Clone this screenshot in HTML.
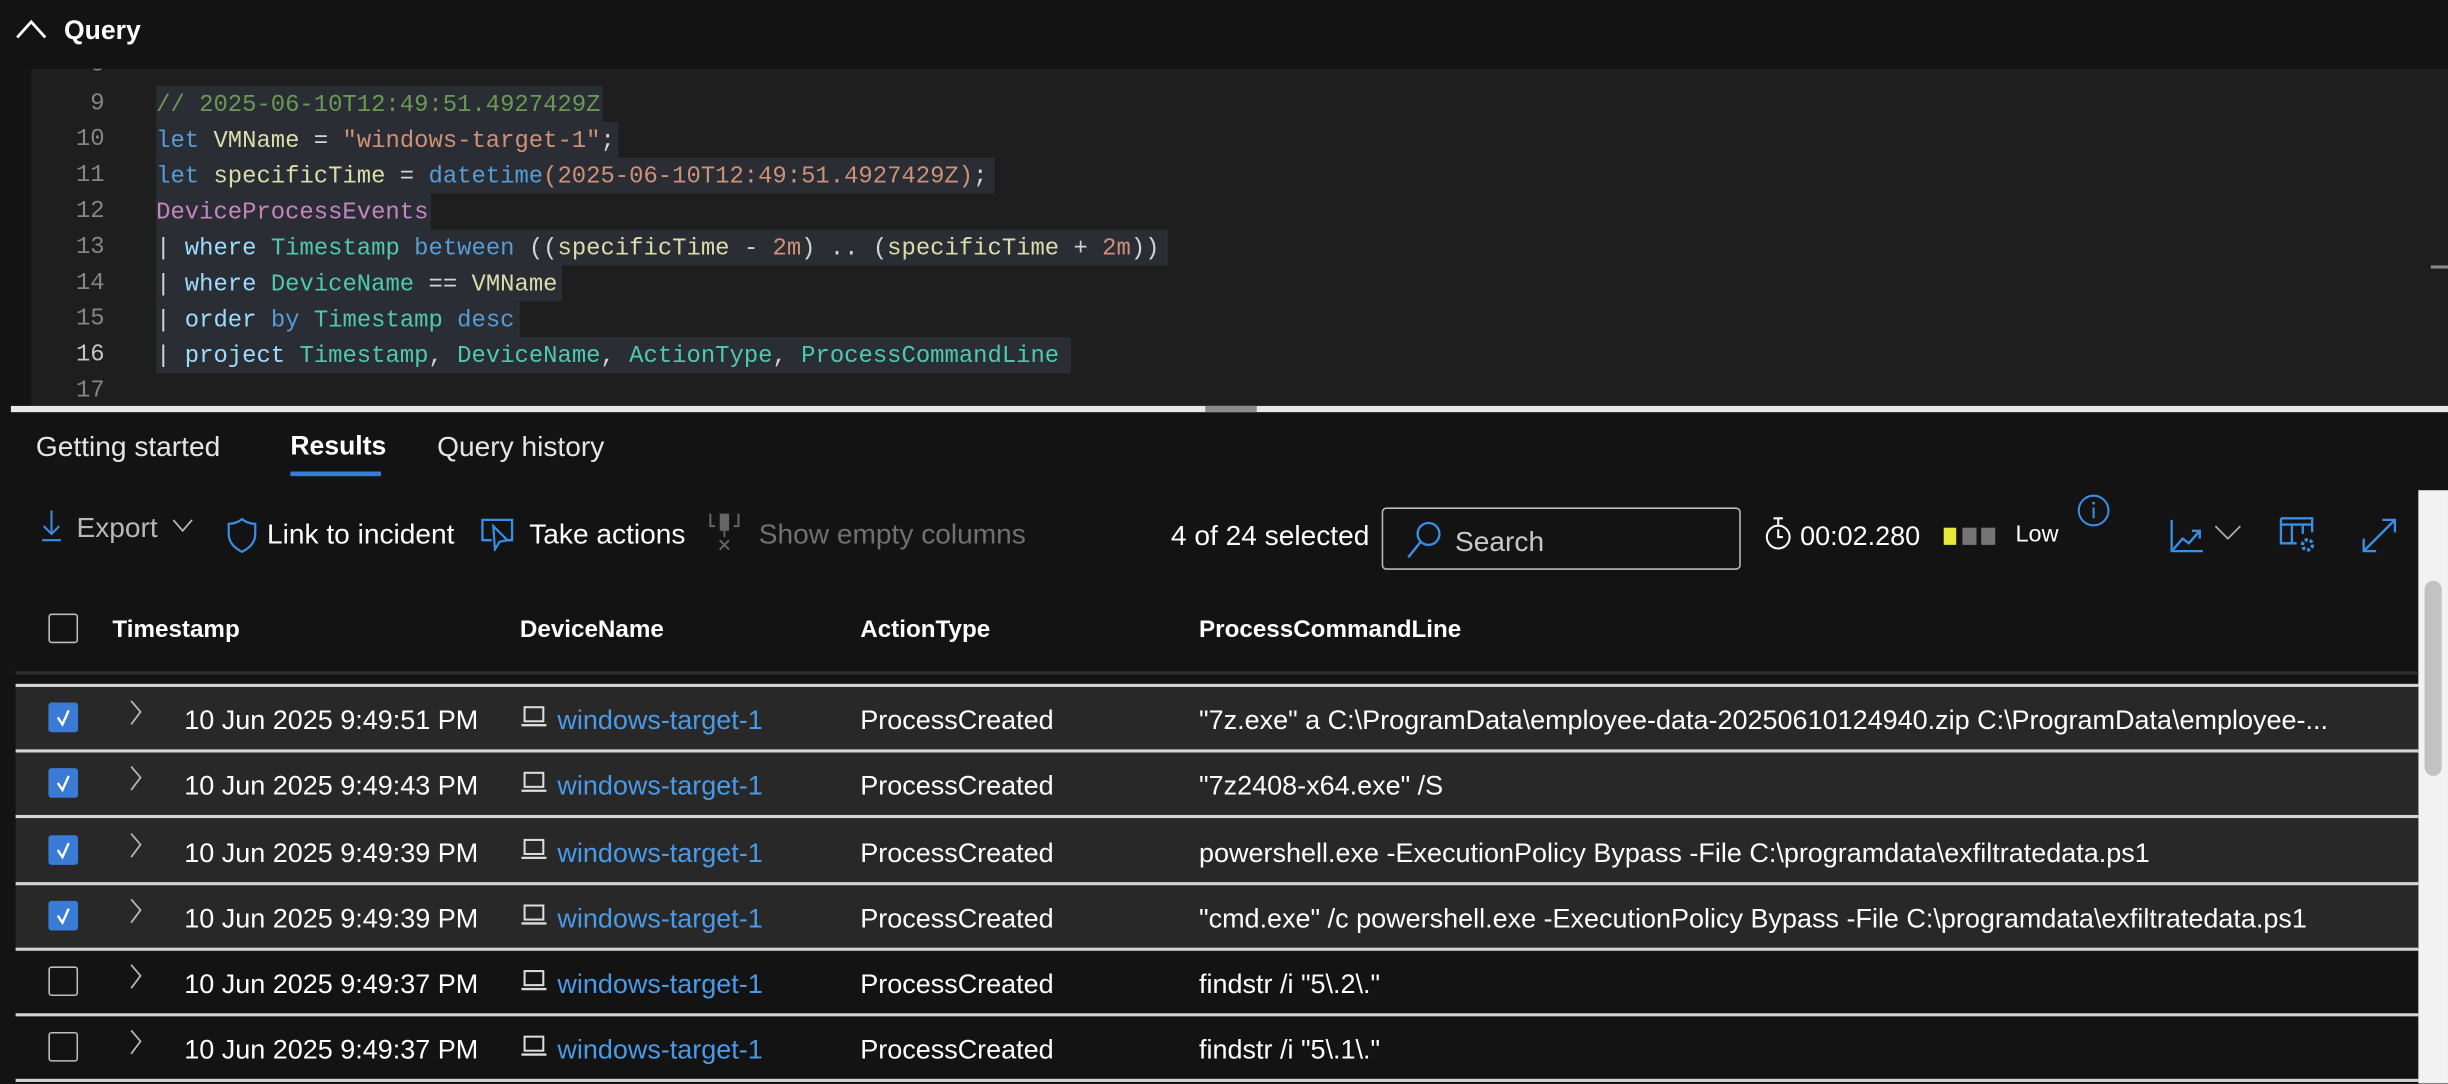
<!DOCTYPE html>
<html><head><meta charset="utf-8">
<style>
*{margin:0;padding:0;box-sizing:border-box}
html,body{width:2448px;height:1084px;overflow:hidden;background:#131313}
#w{position:absolute;left:0;top:0;width:1568px;height:694px;transform:scale(1.56122);transform-origin:0 0;background:#131313;font-family:"Liberation Sans",sans-serif;color:#fff;overflow:hidden}
.a{position:absolute;white-space:nowrap}
.code{font-family:"Liberation Mono",monospace;font-size:15.3px;line-height:23px;position:absolute;left:0;top:44px;width:1568px;height:216px;overflow:hidden}
.code .in{position:absolute;left:0;top:-44px;width:1568px;height:300px}
.ln{position:absolute;width:40px;text-align:right;left:27px;color:#858585}
.sel{position:absolute;left:100px;height:23px;background:#2a2d33}
.c{color:#6a9955}.k{color:#569cd6}.y{color:#dcdcaa}.s{color:#ce9178}.p{color:#c586c0}.lb{color:#9cdcfe}.t{color:#4ec9b0}.w{color:#d4d4d4}
.ui{font-size:17.3px}
.tb{font-size:18px}
.row{position:absolute;left:10px;width:1539px;height:42px}
.sep{position:absolute;left:10px;width:1539px;height:2px;background:#d4d4d4}
.cb{position:absolute;left:31px;width:19px;height:19px;border-radius:2px}
.on{background:#3a7bd5}
.off{border:1.5px solid #bdbdbd}
.hd{font-size:15.5px;font-weight:bold;top:395px}
</style></head><body><div id="w">
<!-- header -->
<svg class="a" style="left:9px;top:12px" width="22" height="14" viewBox="0 0 22 14"><path d="M2 12 L11 2 L20 12" stroke="#fff" stroke-width="1.8" fill="none"/></svg>
<div class="a" style="left:41px;top:10px;font-size:17px;font-weight:bold">Query</div>
<!-- editor -->
<div class="a" style="left:20px;top:44px;width:1548px;height:216px;background:#1e1e1e"></div>
<div class="a" style="left:1557px;top:170px;width:11px;height:2px;background:#888"></div>
<div class="code"><div class="in">
<div class="ln" style="top:30px">8</div>
<div class="ln" style="top:55px">9</div>
<div class="ln" style="top:78px">10</div>
<div class="ln" style="top:101px">11</div>
<div class="ln" style="top:124px">12</div>
<div class="ln" style="top:147px">13</div>
<div class="ln" style="top:170px">14</div>
<div class="ln" style="top:193px">15</div>
<div class="ln" style="top:216px;color:#c6c6c6">16</div>
<div class="ln" style="top:239px">17</div>
<div class="sel" style="top:55px;width:286px"></div>
<div class="sel" style="top:78px;width:296px"></div>
<div class="sel" style="top:101px;width:537px"></div>
<div class="sel" style="top:124px;width:176px"></div>
<div class="sel" style="top:147px;width:648px"></div>
<div class="sel" style="top:170px;width:260px"></div>
<div class="sel" style="top:193px;width:233px"></div>
<div class="sel" style="top:216px;width:586px"></div>
<div class="a" style="left:100px;top:56px"><span class="c">// 2025-06-10T12:49:51.4927429Z</span></div>
<div class="a" style="left:100px;top:79px"><span class="k">let</span> <span class="y">VMName</span> <span class="w">=</span> <span class="s">"windows-target-1"</span><span class="w">;</span></div>
<div class="a" style="left:100px;top:102px"><span class="k">let</span> <span class="y">specificTime</span> <span class="w">=</span> <span class="k">datetime</span><span class="s">(2025-06-10T12:49:51.4927429Z)</span><span class="w">;</span></div>
<div class="a" style="left:100px;top:125px"><span class="p">DeviceProcessEvents</span></div>
<div class="a" style="left:100px;top:148px"><span class="w">|</span> <span class="lb">where</span> <span class="t">Timestamp</span> <span class="k">between</span> <span class="w">((</span><span class="y">specificTime</span> <span class="w">-</span> <span class="s">2m</span><span class="w">) .. (</span><span class="y">specificTime</span> <span class="w">+</span> <span class="s">2m</span><span class="w">))</span></div>
<div class="a" style="left:100px;top:171px"><span class="w">|</span> <span class="lb">where</span> <span class="t">DeviceName</span> <span class="w">==</span> <span class="y">VMName</span></div>
<div class="a" style="left:100px;top:194px"><span class="w">|</span> <span class="lb">order</span> <span class="k">by</span> <span class="t">Timestamp</span> <span class="k">desc</span></div>
<div class="a" style="left:100px;top:217px"><span class="w">|</span> <span class="lb">project</span> <span class="t">Timestamp</span><span class="w">,</span> <span class="t">DeviceName</span><span class="w">,</span> <span class="t">ActionType</span><span class="w">,</span> <span class="t">ProcessCommandLine</span></div>
</div></div>
<div class="a" style="left:7px;top:260px;width:1561px;height:4px;background:#e8e8e8"></div>
<div class="a" style="left:772px;top:260px;width:33px;height:4px;background:#8a8a8a"></div>
<!-- tabs -->
<div class="a tb" style="left:23px;top:276px;color:#e6e6e6">Getting started</div>
<div class="a tb" style="left:186px;top:276px;font-weight:bold;font-size:17px">Results</div>
<div class="a" style="left:186px;top:302px;width:58px;height:3px;background:#3a7bd5"></div>
<div class="a tb" style="left:280px;top:276px;color:#e6e6e6">Query history</div>
<!-- toolbar -->
<svg class="a" style="left:26px;top:326px" width="14" height="22" viewBox="0 0 14 22"><path d="M7 1V16M2 11L7 16L12 11M1 20H13" stroke="#3a8ee6" stroke-width="1.3" fill="none"/></svg>
<div class="a tb" style="left:49px;top:328px;color:#b8b8b8">Export</div>
<svg class="a" style="left:110px;top:332px" width="14" height="10"><path d="M1 1L7 8L13 1" stroke="#b8b8b8" stroke-width="1.1" fill="none"/></svg>
<svg class="a" style="left:145px;top:331px" width="20" height="24" viewBox="0 0 20 24"><path d="M10 1.5C7 4 4 4.5 1.5 4.5V11C1.5 17 6 20.5 10 22.5C14 20.5 18.5 17 18.5 11V4.5C16 4.5 13 4 10 1.5Z" stroke="#3a8ee6" stroke-width="1.4" fill="none"/></svg>
<div class="a tb" style="left:171px;top:332px">Link to incident</div>
<svg class="a" style="left:307px;top:331px" width="24" height="22" viewBox="0 0 24 22"><path d="M8 15H2V2H21V15H17" stroke="#3a8ee6" stroke-width="1.5" fill="none"/><path d="M9 6L10 21L13 16L18 15Z" stroke="#3a8ee6" stroke-width="1.4" fill="#131313"/></svg>
<div class="a tb" style="left:339px;top:332px">Take actions</div>
<svg class="a" style="left:454px;top:328px" width="20" height="26" viewBox="0 0 20 26"><path d="M1 1V9H4M19 1V9H16" stroke="#666" stroke-width="1.3" fill="none"/><rect x="7" y="1" width="6" height="11" fill="#666"/><path d="M10 12V16M7 18L13 24M13 18L7 24" stroke="#666" stroke-width="1.2"/></svg>
<div class="a tb" style="left:486px;top:332px;color:#707070">Show empty columns</div>
<div class="a ui" style="left:750px;top:333px;font-size:18px">4 of 24 selected</div>
<div class="a" style="left:885px;top:325px;width:230px;height:40px;border:1.5px solid #bbb;border-radius:3px"></div>
<svg class="a" style="left:900px;top:333px" width="24" height="26" viewBox="0 0 24 26"><circle cx="15" cy="9" r="7" stroke="#3a8ee6" stroke-width="1.5" fill="none"/><path d="M10 14L2 24" stroke="#3a8ee6" stroke-width="1.6"/></svg>
<div class="a tb" style="left:932px;top:337px;color:#c8c8c8">Search</div>
<svg class="a" style="left:1130px;top:331px" width="18" height="22" viewBox="0 0 18 22"><path d="M6 1H12M9 1V5" stroke="#fff" stroke-width="1.3"/><circle cx="9" cy="13" r="7.3" stroke="#fff" stroke-width="1.3" fill="none"/><path d="M9 8V13H12" stroke="#fff" stroke-width="1.3" fill="none"/></svg>
<div class="a ui" style="left:1153px;top:333px">00:02.280</div>
<div class="a" style="left:1245px;top:338px;width:8px;height:11px;background:#e8e83a"></div>
<div class="a" style="left:1257px;top:338px;width:9px;height:11px;background:#757575"></div>
<div class="a" style="left:1269px;top:338px;width:9px;height:11px;background:#757575"></div>
<div class="a" style="left:1291px;top:334px;font-size:15px">Low</div>
<svg class="a" style="left:1330px;top:316px" width="22" height="22" viewBox="0 0 22 22"><circle cx="11" cy="11" r="9.5" stroke="#3a8ee6" stroke-width="1.3" fill="none"/><path d="M11 9V16" stroke="#3a8ee6" stroke-width="1.3"/><circle cx="11" cy="6.3" r="0.9" fill="#3a8ee6"/></svg>
<svg class="a" style="left:1390px;top:333px" width="22" height="22" viewBox="0 0 22 22"><path d="M1 0V20H21" stroke="#3a8ee6" stroke-width="1.5" fill="none"/><path d="M2 19L8 12L12 15L19 7M14 7H19V12" stroke="#3a8ee6" stroke-width="1.5" fill="none"/></svg>
<svg class="a" style="left:1418px;top:335px" width="18" height="12"><path d="M1 2L9 10L17 2" stroke="#b0b0b0" stroke-width="1.1" fill="none"/></svg>
<svg class="a" style="left:1460px;top:331px" width="24" height="24" viewBox="0 0 24 24"><path d="M1 1H21V10M1 1V17H11M1 5H21M8 5V17M15 5V11" stroke="#3a8ee6" stroke-width="1.5" fill="none"/><circle cx="18" cy="18" r="3.2" stroke="#3a8ee6" stroke-width="2.2" fill="none" stroke-dasharray="2 1.3"/></svg>
<svg class="a" style="left:1512px;top:331px" width="24" height="24" viewBox="0 0 24 24"><path d="M2 22L22 2M14 2H22V10M2 14V22H10" stroke="#3a8ee6" stroke-width="1.5" fill="none"/></svg>
<!-- right scrollbar -->
<div class="a" style="left:1549px;top:314px;width:19px;height:380px;background:#f2f2f2"></div>
<div class="a" style="left:1553px;top:372px;width:11px;height:125px;border-radius:6px;background:#c2c2c2"></div>
<!-- header row -->
<div class="cb off" style="top:393px"></div>
<div class="a hd" style="left:72px">Timestamp</div>
<div class="a hd" style="left:333px">DeviceName</div>
<div class="a hd" style="left:551px">ActionType</div>
<div class="a hd" style="left:768px">ProcessCommandLine</div>
<div class="a" style="left:10px;top:430px;width:1539px;height:2px;background:#2e2e2e"></div>
<!-- rows -->
<div class="row" style="top:439px;background:#282828"></div>
<div class="row" style="top:481px;background:#282828"></div>
<div class="row" style="top:523px;background:#282828"></div>
<div class="row" style="top:566px;background:#282828"></div>
<div class="sep" style="top:437.5px"></div>
<div class="sep" style="top:480px"></div>
<div class="sep" style="top:522px"></div>
<div class="sep" style="top:564.5px"></div>
<div class="sep" style="top:607px"></div>
<div class="sep" style="top:649px"></div>
<div class="sep" style="top:691px"></div>

<div id="rows"></div>
<script>
var d=[[460,1,"10 Jun 2025 9:49:51 PM",'"7z.exe" a C:\\ProgramData\\employee-data-20250610124940.zip C:\\ProgramData\\employee-...'],
[502,1,"10 Jun 2025 9:49:43 PM",'"7z2408-x64.exe" /S'],
[545,1,"10 Jun 2025 9:49:39 PM",'powershell.exe -ExecutionPolicy Bypass -File C:\\programdata\\exfiltratedata.ps1'],
[587,1,"10 Jun 2025 9:49:39 PM",'"cmd.exe" /c powershell.exe -ExecutionPolicy Bypass -File C:\\programdata\\exfiltratedata.ps1'],
[629,0,"10 Jun 2025 9:49:37 PM",'findstr /i "5\\.2\\."'],
[671,0,"10 Jun 2025 9:49:37 PM",'findstr /i "5\\.1\\."']];
var h="";
d.forEach(function(r){var y=r[0];
h+='<div class="cb '+(r[1]?'on':'off')+'" style="top:'+(y-10)+'px">'+(r[1]?'<svg width="19" height="19"><path d="M6 9.5L9 14L13 5" stroke="#fff" stroke-width="1.5" fill="none"/></svg>':'')+'</div>';
h+='<svg class="a" style="left:82px;top:'+(y-12)+'px" width="10" height="18"><path d="M2 1L8 8L2 16" stroke="#bbb" stroke-width="1.1" fill="none"/></svg>';
h+='<div class="a ui" style="left:118px;top:'+(y-9)+'px">'+r[2]+'</div>';
h+='<svg class="a" style="left:333px;top:'+(y-8)+'px" width="18" height="14" viewBox="0 0 18 14"><rect x="3" y="1" width="12" height="9" stroke="#ddd" stroke-width="1.3" fill="none"/><path d="M1 12.5H17" stroke="#ddd" stroke-width="1.5"/></svg>';
h+='<div class="a ui" style="left:357px;top:'+(y-9)+'px;color:#4a9ae8">windows-target-1</div>';
h+='<div class="a ui" style="left:551px;top:'+(y-9)+'px">ProcessCreated</div>';
h+='<div class="a ui" style="left:768px;top:'+(y-9)+'px">'+r[3].replace(/</g,"&lt;")+'</div>';
});
document.getElementById("rows").innerHTML=h;
</script>
</div></body></html>
